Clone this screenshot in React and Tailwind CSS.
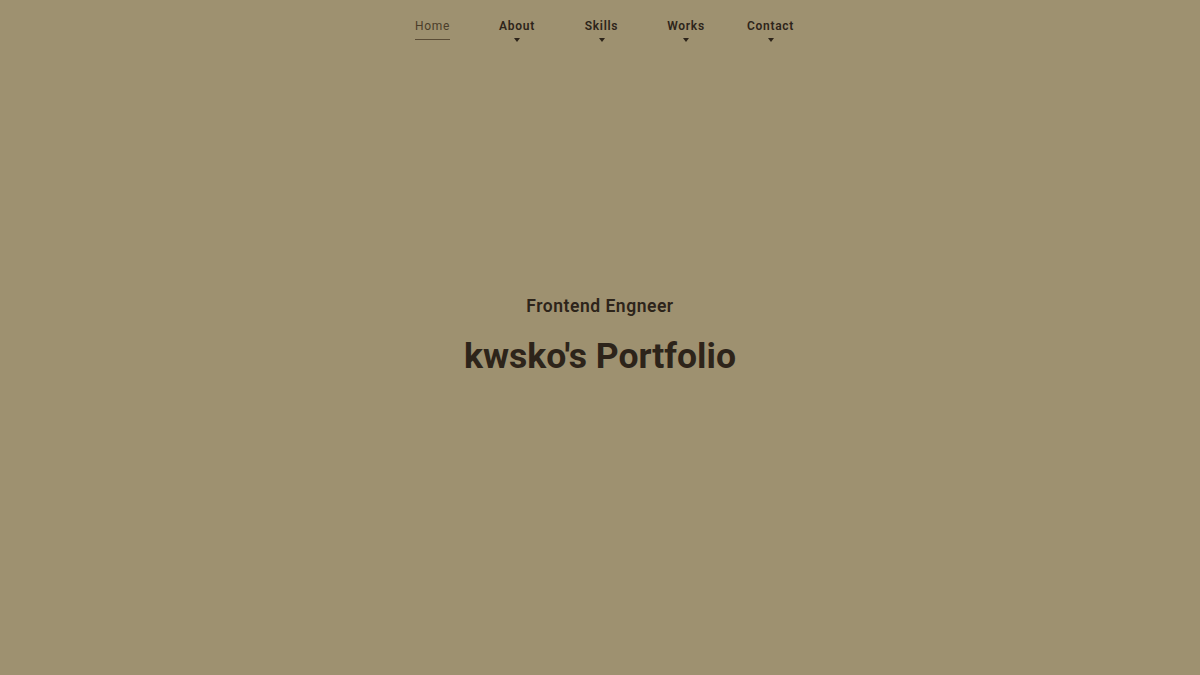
import { useState } from 'react';

const navItems = [
    { label: 'Home', active: true },
    { label: 'About' },
    { label: 'Skills' },
    { label: 'Works' },
    { label: 'Contact' },
];

export default function App() {
    const [current, setCurrent] = useState('Home');

    return (
        <div className="h-[675px] w-full bg-[#9e9170] text-[#2d241a] flex flex-col" style={{ fontFamily: 'Roboto, sans-serif' }}>
            {/* Nav */}
            <nav className="flex justify-center pt-[18px] pl-[3px]">
                {navItems.map((item) => {
                    const active = current === item.label;
                    return (
                        <button
                            key={item.label}
                            onClick={() => setCurrent(item.label)}
                            className="w-[84.5px] flex flex-col items-center"
                        >
                            <span className={`text-[12px] leading-[16px] tracking-[0.06em] ${active ? 'font-normal text-[#4a3d2a] border-b border-[#5a4c36] pb-[5px]' : 'font-semibold'}`}>
                                {item.label}
                            </span>
                            {!active && (
                                <span className="mt-[4px] w-0 h-0 border-l-[3.5px] border-r-[3.5px] border-t-[4px] border-l-transparent border-r-transparent border-t-[#2d241a]" />
                            )}
                        </button>
                    );
                })}
            </nav>

            {/* Hero */}
            <main className="flex-1 flex flex-col items-center pt-[252px]">
                <p className="text-[17.5px] leading-[24px] font-semibold tracking-[0.03em]">Frontend Engneer</p>
                <h1 className="mt-[18px] text-[35.5px] leading-[40px] font-bold">kwsko's Portfolio</h1>
            </main>
        </div>
    );
}
